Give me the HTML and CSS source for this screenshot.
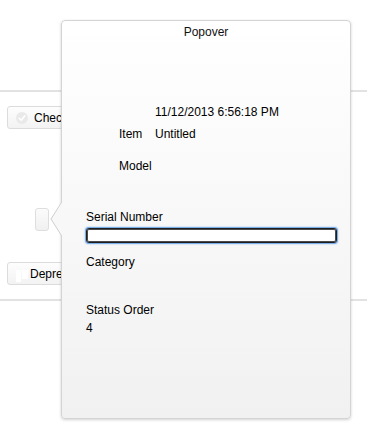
FILE: index.html
```html
<!DOCTYPE html>
<html lang="en">
<head>
    <meta charset="UTF-8">
    <meta name="viewport" content="width=device-width, initial-scale=1.0">
    <title>Popover</title>
    <link rel="stylesheet" href="styles.css">
</head>
<body>
    <div class="backdrop">
        <div class="rule"></div>
        <button class="btn btn-check">
            <span class="check-icon">
                <svg width="12" height="12" viewBox="0 0 12 12"><circle cx="6" cy="6" r="6" fill="#e9e9e9"/><path d="M3.2 6.2 L5.2 8.2 L8.8 3.8" fill="none" stroke="#fff" stroke-width="1.6" stroke-linecap="round" stroke-linejoin="round"/></svg>
            </span>
            Checkout
        </button>
        <div class="handle"></div>
        <button class="btn btn-depre">
            <span class="bars-icon"><i></i><i></i></span>
            Depreciate
        </button>
        <div class="rule"></div>
    </div>

    <div class="popover">
        <svg class="arrow" width="12" height="36" viewBox="0 0 12 36">
            <polygon points="12,0.5 1,18 12,35.5" fill="#f8f8f8"/>
            <polyline points="12,0.5 1,18 12,35.5" fill="none" stroke="#cfcfcf" stroke-width="1"/>
        </svg>
        <div class="popover-title">Popover</div>

        <div class="details">
            <div class="row row-date">
                <span class="row-label"></span>
                <span>11/12/2013 6:56:18 PM</span>
            </div>
            <div class="row row-item">
                <span class="row-label">Item</span>
                <span>Untitled</span>
            </div>
            <div class="row row-model">
                <span class="row-label">Model</span>
                <span></span>
            </div>
        </div>

        <div class="fields">
            <label class="field-label">Serial Number</label>
            <input class="field-input" type="text">
            <div class="field-label category">Category</div>
            <div class="field-label status">Status Order</div>
            <div class="field-value">4</div>
        </div>
    </div>
</body>
</html>
```

FILE: styles.css
```css
body, html {
    margin: 0;
    font-family: 'Liberation Sans', Arial, sans-serif;
    font-size: 12px;
    color: #000;
    background-color: #fff;
}

/* Page behind the popover */
.backdrop {
    padding-top: 90px;
}

.rule {
    height: 2px;
    background: #e2e2e2;
}

.btn {
    display: flex;
    align-items: center;
    width: 120px;
    height: 23px;
    margin-left: 7px;
    padding: 0 0 0 7px;
    border: 1px solid #dcdcdc;
    border-radius: 3px;
    background: linear-gradient(#fdfdfd, #f3f3f3);
    font-family: inherit;
    font-size: 12px;
    color: #000;
    white-space: nowrap;
    overflow: hidden;
    box-sizing: border-box;
}

.btn-check {
    margin-top: 14px;
    gap: 6px;
}

.check-icon {
    display: flex;
    padding-left: 1px;
}

.handle {
    width: 14px;
    height: 23px;
    margin: 79px 0 0 35px;
    border: 1px solid #dedede;
    border-radius: 3px;
    background: linear-gradient(#fbfbfb, #f1f1f1);
    box-sizing: border-box;
}

.btn-depre {
    margin-top: 31px;
    margin-bottom: 14px;
    gap: 2px;
}

.bars-icon {
    display: flex;
    gap: 1px;
    padding-left: 1px;
    align-self: flex-end;
    margin-bottom: 2px;
}

.bars-icon i {
    display: block;
    width: 5px;
    height: 12px;
    background: #fff;
}

.bars-icon i + i {
    width: 6px;
    height: 9px;
}

/* Popover */
.popover {
    position: absolute;
    left: 61px;
    top: 20px;
    width: 290px;
    height: 399px;
    box-sizing: border-box;
    border: 1px solid #d4d4d4;
    border-radius: 4px;
    background: linear-gradient(#ffffff, #f1f1f1);
    box-shadow: 0 1px 3px rgba(0, 0, 0, 0.18);
}

.arrow {
    position: absolute;
    left: -12px;
    top: 180px;
}

.popover-title {
    margin-top: 4px;
    line-height: 14px;
    text-align: center;
    color: #111;
}

.details {
    margin-top: 66px;
    padding-left: 57px;
}

.row {
    display: flex;
    line-height: 14px;
}

.row-label {
    width: 36px;
    flex-shrink: 0;
}

.row-item {
    margin-top: 8px;
}

.row-model {
    margin-top: 18px;
}

.fields {
    display: flex;
    flex-direction: column;
    align-items: flex-start;
    padding-left: 24px;
    margin-top: 37px;
}

.field-label,
.field-value {
    line-height: 14px;
}

.field-input {
    width: 251px;
    height: 15px;
    margin: 4px 0 0 0;
    padding: 0 3px;
    box-sizing: border-box;
    border: 1px solid #1e1e1e;
    border-radius: 3px;
    background: #fff;
    font-family: inherit;
    font-size: 12px;
    outline: none;
    box-shadow: inset 0 0 0 1px #4a4a4a, 0 0 0 1px #79aee8, 0 0 2px 1px rgba(80, 145, 225, 0.55);
}

.category {
    margin-top: 12px;
}

.status {
    margin-top: 34px;
}

.field-value {
    margin-top: 4px;
}
```
